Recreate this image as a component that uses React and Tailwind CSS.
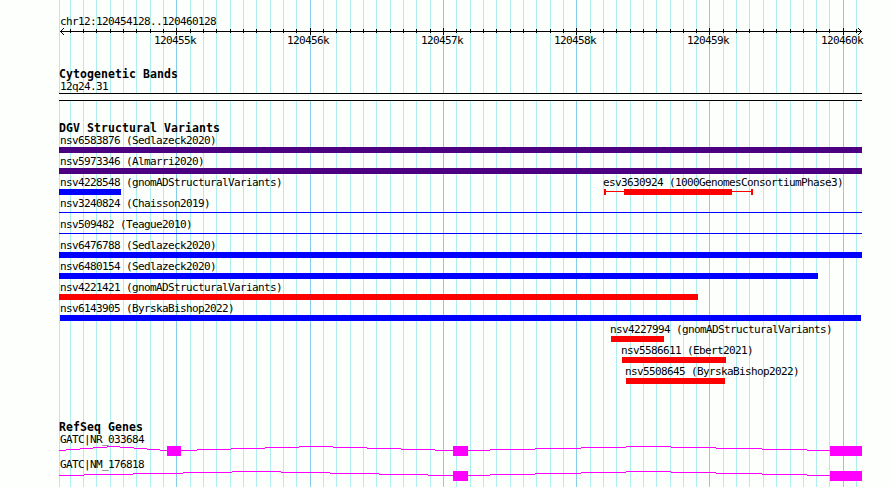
const MINOR_LINES = [
    59, 70, 83, 96, 110, 123, 136, 150, 163, 190, 203, 216, 230, 243, 256, 270, 283, 296,
    323, 336, 350, 363, 376, 390, 403, 416, 430, 456, 470, 483, 496, 510, 523, 536, 550, 563,
    590, 603, 616, 630, 643, 656, 670, 683, 696, 723, 736, 749, 763, 776, 790, 803, 816, 829, 856,
]

const MAJOR_LINES = [176, 310, 443, 576, 709, 843]

const MAJOR_LABELS = ["120455k", "120456k", "120457k", "120458k", "120459k", "120460k"]

const INDIGO = "bg-[#4b0082]"
const BLUE = "bg-[#0000ff]"
const RED = "bg-[#ff0000]"

// start / end are in pixels of the whole panel, the tracks begin at 59
const VARIANTS = [
    { name: "nsv6583876 (Sedlazeck2020)", label: 60, start: 59, end: 862, color: INDIGO },
    { name: "nsv5973346 (Almarri2020)", label: 60, start: 59, end: 862, color: INDIGO },
    {
        name: "nsv4228548 (gnomADStructuralVariants)", label: 60, start: 59, end: 121, color: BLUE,
        next: { name: "esv3630924 (1000GenomesConsortiumPhase3)", label: 603 },
    },
    { name: "nsv3240824 (Chaisson2019)", label: 60, start: 59, end: 862, color: BLUE, thin: true },
    { name: "nsv509482 (Teague2010)", label: 60, start: 59, end: 862, color: BLUE, thin: true },
    { name: "nsv6476788 (Sedlazeck2020)", label: 60, start: 59, end: 862, color: BLUE },
    { name: "nsv6480154 (Sedlazeck2020)", label: 60, start: 59, end: 818, color: BLUE },
    { name: "nsv4221421 (gnomADStructuralVariants)", label: 60, start: 59, end: 698, color: RED },
    { name: "nsv6143905 (ByrskaBishop2022)", label: 60, start: 60, end: 861, color: BLUE },
    { name: "nsv4227994 (gnomADStructuralVariants)", label: 610, start: 611, end: 664, color: RED },
    { name: "nsv5586611 (Ebert2021)", label: 621, start: 622, end: 726, color: RED },
    { name: "nsv5508645 (ByrskaBishop2022)", label: 625, start: 626, end: 725, color: RED },
]

// [from, to, height above the base line]
const RIGHT_INTRON = [
    [468, 490, 0], [490, 535, 1], [535, 581, 2], [581, 626, 3], [626, 671, 4],
    [671, 716, 3], [716, 762, 2], [762, 807, 1], [807, 830, 0],
]

const GENES = [
    {
        name: "GATC|NR_033684",
        exons: [[167, 181], [453, 468], [830, 862]],
        introns: [
            [59, 66, 0], [66, 80, 1], [80, 93, 2], [93, 107, 3], [107, 120, 4],
            [120, 134, 3], [134, 147, 2], [147, 160, 1], [160, 167, 0],
            [181, 197, 0], [197, 231, 1], [231, 265, 2], [265, 299, 3], [299, 333, 4],
            [333, 367, 3], [367, 401, 2], [401, 435, 1], [435, 453, 0],
            ...RIGHT_INTRON,
        ],
    },
    {
        name: "GATC|NM_176818",
        exons: [[453, 468], [830, 862]],
        introns: [
            [59, 84, 0], [84, 133, 1], [133, 183, 2], [183, 232, 3], [232, 281, 4],
            [281, 330, 3], [330, 379, 2], [379, 428, 1], [428, 453, 0],
            ...RIGHT_INTRON,
        ],
    },
]

const Label = ({ children }) => (
    <span className="block h-[14px] w-0 whitespace-pre pt-px text-[11px] leading-[14px] tracking-[-0.622px]">{children}</span>
)

const Heading = ({ children }) => (
    <h2 className="h-[12px] whitespace-pre pl-[59px] text-[11.5px] font-bold leading-[15px] tracking-[0.077px]">{children}</h2>
)

const Grid = () => (
    <svg className="absolute inset-0" width="890" height="487" shapeRendering="crispEdges">
        {MINOR_LINES.map((x) => <rect key={x} x={x} y="0" width="1" height="487" fill="#afeeee" />)}
        {MAJOR_LINES.map((x) => <rect key={x} x={x} y="0" width="1" height="487" fill="#87ceeb" />)}
    </svg>
)

const Ruler = () => (
    <div>
        <svg className="block" width="890" height="7" shapeRendering="crispEdges">
            <rect x="60" y="3" width="802" height="1" />
            {MINOR_LINES.slice(1).map((x) => <rect key={x} x={x} y="1" width="1" height="4" />)}
            {MAJOR_LINES.map((x) => <rect key={x} x={x} y="0" width="1" height="7" />)}
            {[1, 2, 3].map((d) => (
                <g key={d}>
                    <rect x={60 + d} y={3 - d} width="1" height="1" />
                    <rect x={60 + d} y={3 + d} width="1" height="1" />
                    <rect x={861 - d} y={3 - d} width="1" height="1" />
                    <rect x={861 - d} y={3 + d} width="1" height="1" />
                </g>
            ))}
        </svg>
        <div className="-mt-[2px] grid grid-cols-[133px_134px_133px_133px_134px_60px] pl-[154px]">
            {MAJOR_LABELS.map((label) => <Label key={label}>{label}</Label>)}
        </div>
    </div>
)

const Variant = ({ item }) => (
    <div className="h-[21px]">
        <div className="flex" style={{ paddingLeft: item.label }}>
            <Label>{item.name}</Label>
            {item.next && (
                <div style={{ marginLeft: item.next.label - item.label }}>
                    <Label>{item.next.name}</Label>
                </div>
            )}
        </div>
        <div className="flex h-[6px] items-start">
            <div
                className={`shrink-0 ${item.thin ? "mt-[2px] h-px" : "h-[6px]"} ${item.color}`}
                style={{ marginLeft: item.start, width: item.end - item.start }}
            />
            {item.next && (
                <div className="ml-[483px] flex h-[6px] items-start">
                    <div className="h-[6px] w-[2px] bg-[#ff0000]" />
                    <div className="mt-[2px] h-px w-[18px] bg-[#ff0000]" />
                    <div className="h-[6px] w-[108px] bg-[#ff0000]" />
                    <div className="mt-[2px] h-px w-[19px] bg-[#ff0000]" />
                    <div className="h-[6px] w-[2px] bg-[#ff0000]" />
                </div>
            )}
        </div>
    </div>
)

const Gene = ({ gene }) => (
    <div className="h-[25px]">
        <div className="pl-[60px]">
            <Label>{gene.name}</Label>
        </div>
        <svg className="block" width="890" height="11" fill="#ff00ff" shapeRendering="crispEdges">
            {gene.introns.map(([from, to, up]) => (
                <rect key={from} x={from} y={4 - up} width={to - from} height="1" />
            ))}
            {gene.exons.map(([from, to]) => (
                <rect key={from} x={from} y="0" width={to - from} height="10" />
            ))}
        </svg>
    </div>
)

export default function App() {
    return (
        <div className="relative h-[487px] w-[890px] overflow-hidden bg-[#fdfffc] font-['DejaVu_Sans_Mono',monospace] text-black">
            <Grid />
            <main className="relative flex flex-col">
                <div className="pl-[60px] pt-[14px]">
                    <Label>chr12:120454128..120460128</Label>
                </div>
                <Ruler />

                <section className="pt-[20px]">
                    <Heading>Cytogenetic Bands</Heading>
                    <div className="pl-[60px]">
                        <Label>12q24.31</Label>
                    </div>
                    <div className="ml-[59px] h-[8px] w-[803px] border-y border-black bg-[#fdfffc]" />
                </section>

                <section className="pt-[20px]">
                    <Heading>DGV Structural Variants</Heading>
                    {VARIANTS.map((item) => <Variant key={item.name} item={item} />)}
                </section>

                <section className="pt-[35px]">
                    <Heading>RefSeq Genes</Heading>
                    {GENES.map((gene) => <Gene key={gene.name} gene={gene} />)}
                </section>
            </main>
        </div>
    )
}
